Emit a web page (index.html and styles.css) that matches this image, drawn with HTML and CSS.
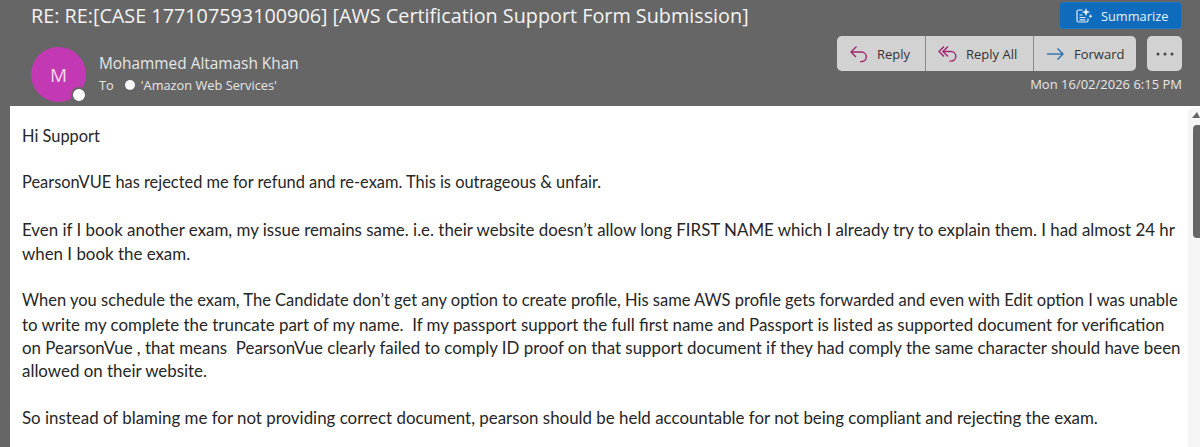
FILE: index.html
```html
<!DOCTYPE html>
<html lang="en">
<head>
<meta charset="UTF-8">
<meta name="viewport" content="width=device-width, initial-scale=1.0">
<title>RE: RE:[CASE 177107593100906]</title>
<link rel="stylesheet" href="styles.css">
</head>
<body>

<div class="header">
  <div class="subject-row">
    <h1 class="subject">RE: RE:[CASE 177107593100906] [AWS Certification Support Form Submission]</h1>
    <button class="summarize">
      <svg width="18" height="18" viewBox="0 0 18 18" fill="none" stroke="#e4eef8" stroke-width="1.2">
        <path d="M7.500 3H3.500A1.500 1.500 0 0 0 2 4.500v9A1.500 1.500 0 0 0 3.500 15h8a1.500 1.500 0 0 0 1.500-1.500V11.500"/>
        <path d="M4.500 8h3M4.500 10.500h6M4.500 12.800h6"/>
        <path d="M11 1l1.100 3 3 1.100-3 1.100-1.100 3-1.100-3-3-1.100 3-1.100z" fill="#e4eef8" stroke="none"/>
        <path d="M15.500 7.500v3.400M13.800 9.200h3.400" stroke-width="1"/>
      </svg>
      Summarize
    </button>
  </div>
  <div class="sender-row">
    <div class="avatar">M<span class="presence"></span></div>
    <div class="sender">
      <div class="sender-name">Mohammed Altamash Khan</div>
      <div class="recipients">To <span class="dot"></span>'Amazon Web Services'</div>
    </div>
    <div class="actions">
      <div class="action-buttons">
        <div class="btn-group">
          <button class="btn btn-reply">
            <svg width="20" height="20" viewBox="0 0 20 20" fill="none" stroke="#a3246f" stroke-width="1.400">
              <path d="M7.500 2.500L2 8l5 5"/>
              <path d="M2 8h10.500a4.800 4.800 0 0 1 0 9.600H11"/>
            </svg>
            Reply
          </button>
          <button class="btn btn-reply-all">
            <svg width="20" height="20" viewBox="0 0 20 20" fill="none" stroke="#a3246f" stroke-width="1.400">
              <path d="M6 2.500L1 7.500l5 5"/>
              <path d="M10 2.500L5 7.500l5 5"/>
              <path d="M5 7.500h8a4.800 4.800 0 0 1 0 9.600h-1.500"/>
            </svg>
            Reply All
          </button>
          <button class="btn btn-forward">
            <svg width="20" height="20" viewBox="0 0 20 20" fill="none" stroke="#1f6aa8" stroke-width="1.300">
              <path d="M1 10h16"/>
              <path d="M11.500 4.500L17 10l-5.500 5.500"/>
            </svg>
            Forward
          </button>
        </div>
        <button class="btn more" aria-label="More">
          <svg width="18" height="4" viewBox="0 0 18 4" fill="#444">
            <circle cx="2" cy="2" r="1.500"/>
            <circle cx="9" cy="2" r="1.500"/>
            <circle cx="16" cy="2" r="1.500"/>
          </svg>
        </button>
      </div>
      <div class="date">Mon 16/02/2026 6:15 PM</div>
    </div>
  </div>
</div>

<div class="body">
  <p class="greeting">Hi Support</p>
  <p class="lead">PearsonVUE has rejected me for refund and re-exam. This is outrageous &amp; unfair.</p>
  <p>Even if I book another exam, my issue remains same. i.e. their website doesn’t allow long FIRST NAME which I already try to explain them. I had almost 24 hr when I book the exam.</p>
  <p><span class="tight">When you schedule the exam, The Candidate don’t get any option to create profile, His same AWS profile gets forwarded and even with Edit option I was unable</span> to write my complete the truncate part of my name.&nbsp; If my passport support the full first name and Passport is listed as supported document for verification on PearsonVue , that means&nbsp; PearsonVue clearly failed to comply ID proof on that support document if they had comply the same character should have been allowed on their website.</p>
  <p>So instead of blaming me for not providing correct document, pearson should be held accountable for not being compliant and rejecting the exam.</p>
  <div class="scrollbar">
    <span class="scroll-up"></span>
    <span class="scroll-thumb"></span>
  </div>
</div>

</body>
</html>
```

FILE: styles.css
```css
html, body {
  margin: 0;
  height: 447px;
  overflow: hidden;
}
body {
  font-family: "Open Sans", "Noto Sans", sans-serif;
  background: #666;
  display: flex;
  flex-direction: column;
}
button {
  font-family: inherit;
}
.header {
  height: 106px;
  flex: none;
  padding: 0 18px 0 31px;
  color: #f2f2f2;
  box-sizing: border-box;
}
.subject-row {
  display: flex;
  justify-content: space-between;
  padding-top: 2px;
}
.subject {
  margin: 0;
  font-size: 19.8px;
  font-weight: 400;
  line-height: 27px;
  color: #f4f4f4;
  white-space: nowrap;
}
.summarize {
  width: 123px;
  height: 27px;
  display: flex;
  align-items: center;
  gap: 8px;
  background: #0f6cbd;
  border: 1px solid #1a78c8;
  border-radius: 4px;
  color: #e8f1fa;
  font-size: 12.800px;
  padding: 0 0 0 15px;
}
.sender-row {
  display: flex;
  margin-top: 7px;
}
.avatar {
  position: relative;
  flex: none;
  width: 55px;
  height: 55px;
  margin-top: 11px;
  border-radius: 50%;
  background: #c239b3;
  color: #f5d9f1;
  font-size: 19px;
  display: flex;
  align-items: center;
  justify-content: center;
}
.presence {
  position: absolute;
  right: -1px;
  bottom: -1px;
  width: 12px;
  height: 12px;
  background: #fff;
  border: 2px solid #666;
  border-radius: 50%;
}
.sender {
  margin: 17px 0 0 13px;
}
.sender-name {
  font-size: 15.400px;
  line-height: 21px;
  color: #e6e6e6;
}
.recipients {
  font-size: 12.800px;
  line-height: 22px;
  color: #e6e6e6;
  display: flex;
  align-items: center;
  white-space: nowrap;
}
.dot {
  width: 10px;
  height: 10px;
  margin: 0 6px 0 11px;
  background: #f7f7f7;
  border-radius: 50%;
}
.actions {
  margin-left: auto;
  width: 345px;
}
.action-buttons {
  display: flex;
  justify-content: space-between;
}
.btn-group {
  display: flex;
  gap: 1px;
  background: #888;
  border-radius: 5px;
}
.btn {
  height: 35px;
  display: flex;
  align-items: center;
  gap: 8px;
  padding: 0 0 0 12px;
  background: #d2d2d2;
  border: none;
  color: #333;
  font-size: 13px;
  white-space: nowrap;
}
.btn-reply {
  width: 88px;
}
.btn-reply-all {
  width: 107px;
}
.btn-forward {
  width: 102px;
}
.btn-group .btn:first-child {
  border-radius: 5px 0 0 5px;
}
.btn-group .btn:last-child {
  border-radius: 0 5px 5px 0;
}
.more {
  width: 35px;
  justify-content: center;
  padding: 0;
  border-radius: 5px;
}
.date {
  margin-top: 3px;
  text-align: right;
  font-size: 13px;
  line-height: 20px;
  color: #e6e6e6;
}
.body {
  position: relative;
  flex: 1;
  margin-left: 10px;
  padding: 18px 18px 0 12px;
  background: #fff;
  color: #262626;
  font-family: Lato, "Open Sans", sans-serif;
  font-size: 16.900px;
  line-height: 23.330px;
}
.body p {
  margin: 0 0 23.330px;
}
.body .greeting {
  font-size: 16.400px;
  margin-bottom: 22.500px;
}
.body .lead {
  font-size: 16.400px;
  margin-bottom: 25.300px;
}
.tight {
  font-size: 16.500px;
}
.scrollbar {
  position: absolute;
  top: 2px;
  right: 0;
  bottom: 0;
  width: 12px;
  background: #f5f5f5;
  border-radius: 5px 0 0 0;
}
.scroll-up {
  position: absolute;
  top: 4px;
  right: 0;
  width: 0;
  height: 0;
  border-left: 5px solid transparent;
  border-right: 3px solid transparent;
  border-bottom: 6px solid #666;
}
.scroll-thumb {
  position: absolute;
  top: 17px;
  right: 0;
  width: 7px;
  height: 113px;
  background: #666;
  border-radius: 4px 0 0 4px;
}
```
